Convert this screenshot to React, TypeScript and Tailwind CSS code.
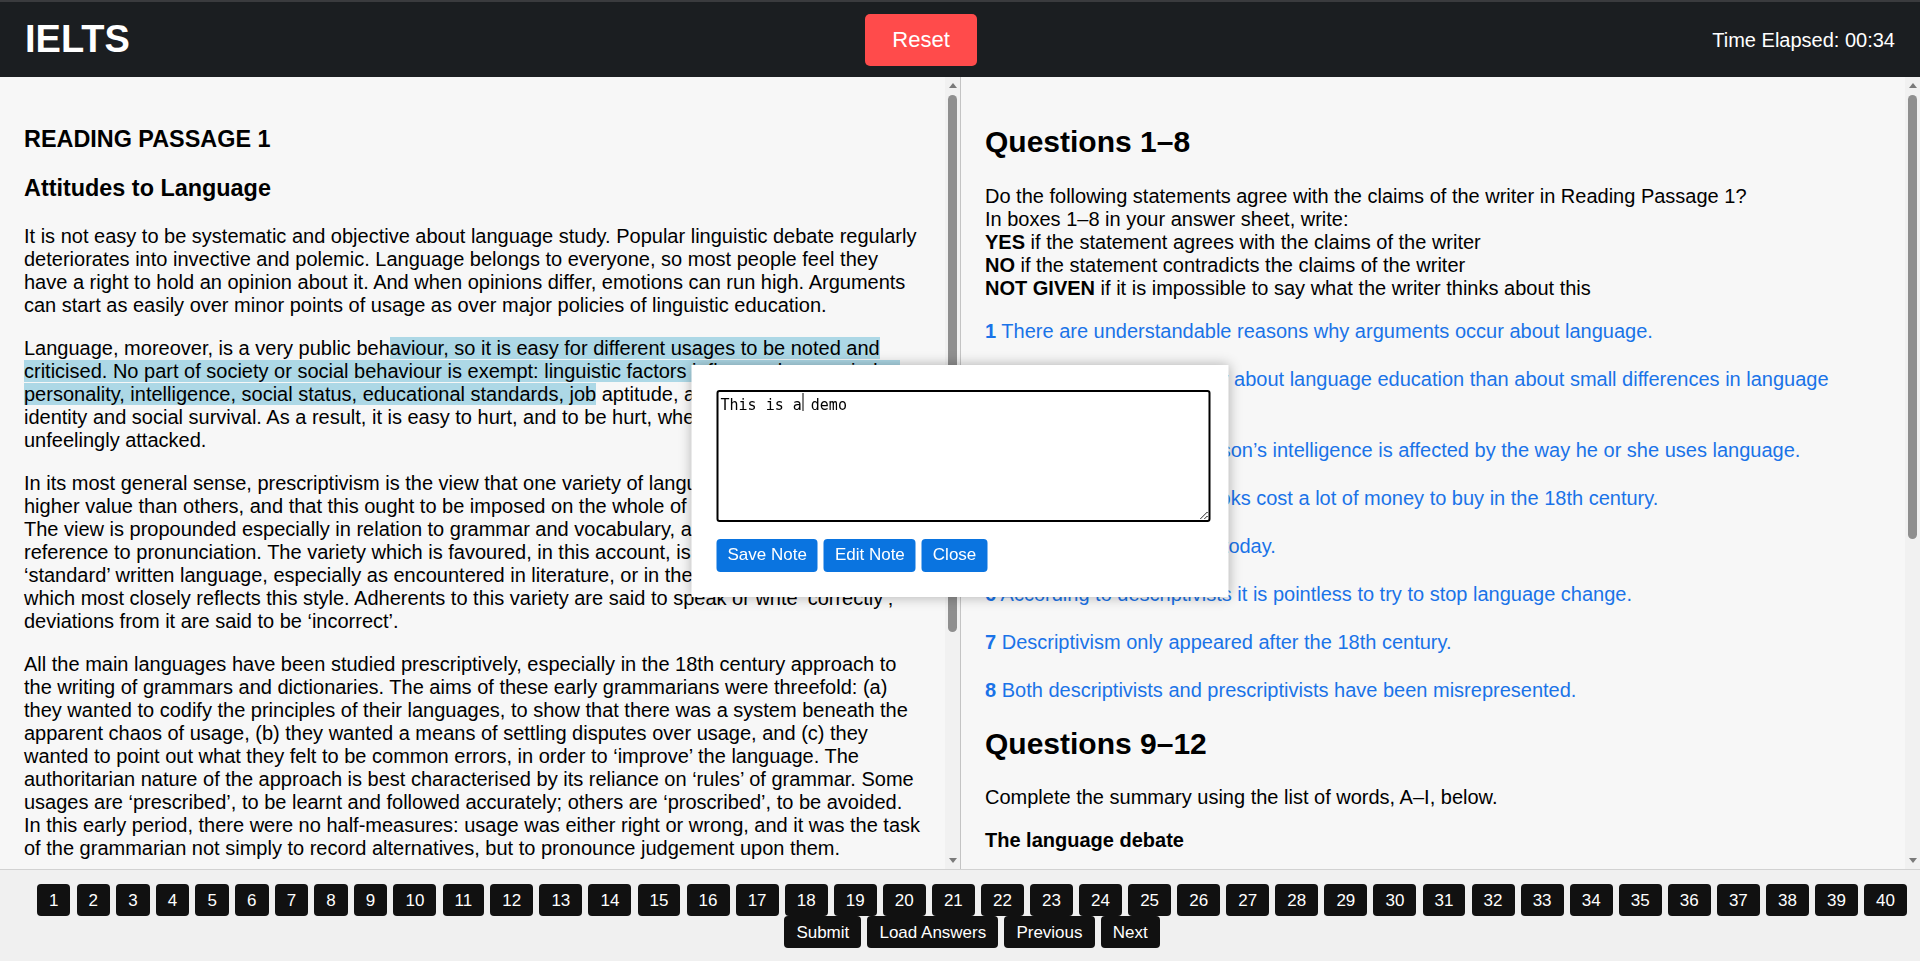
import React, { useEffect, useRef } from 'react';

const questions = [
  'There are understandable reasons why arguments occur about language.',
  'People feel more strongly about language education than about small differences in language usage.',
  'Our assessment of a person\u2019s intelligence is affected by the way he or she uses language.',
  'Prescriptive grammar books cost a lot of money to buy in the 18th century.',
  'Prescriptivism still exists today.',
  'According to descriptivists it is pointless to try to stop language change.',
  'Descriptivism only appeared after the 18th century.',
  'Both descriptivists and prescriptivists have been misrepresented.',
];

const wordList = [
  ['A', 'descriptivists'],
  ['B', 'language experts'],
  ['C', 'popular speech'],
  ['D', 'formal language'],
  ['E', 'evaluation'],
  ['F', 'rules'],
  ['G', 'modern linguists'],
  ['H', 'prescriptivists'],
  ['I', 'change'],
];

const navBtn =
  'h-[32px] px-[12px] bg-[#111111] text-white text-[17px] rounded-[4px] leading-none';

const noteBtn = 'h-[33px] px-[11px] bg-[#0a74e0] text-white text-[17px] rounded-[4px]';

// desktop style scrollbar drawn beside the pane (the headless shot hides native ones)
function ScrollTrack({ thumb }: { thumb: string }) {
  return (
    <div className="w-[15px] shrink-0 bg-[#f1f1f1] flex flex-col items-center">
      <div className="h-[17px] flex items-center justify-center">
        <div className="w-0 h-0 border-x-[4px] border-x-transparent border-b-[5px] border-b-[#7a7a7a]" />
      </div>
      <div className={`w-[9px] rounded-full bg-[#8f8f8f] mt-px ${thumb}`} />
      <div className="flex-1" />
      <div className="h-[17px] flex items-center justify-center">
        <div className="w-0 h-0 border-x-[4px] border-x-transparent border-t-[5px] border-t-[#7a7a7a]" />
      </div>
    </div>
  );
}

export default function App() {
  const noteRef = useRef<HTMLTextAreaElement>(null);

  useEffect(() => {
    const el = noteRef.current;
    if (el) {
      el.focus();
      el.setSelectionRange(9, 9);
    }
  }, []);

  return (
    <div className="h-screen flex flex-col font-['Liberation_Sans',Arial,sans-serif] text-black">
      {/* top bar */}
      <header className="h-[77px] shrink-0 border-t-2 border-[#3a3b3e] bg-[#1b1e21] px-[25px] flex items-center justify-between">
        <h1 className="text-white text-[38px] font-bold">IELTS</h1>
        <button className="h-[52px] px-[27px] bg-[#ff4b4b] text-white text-[22px] rounded-[5px]">
          Reset
        </button>
        <div className="text-white text-[20px]">Time Elapsed: 00:34</div>
      </header>

      <main className="flex-1 min-h-0 flex">
        {/* passage */}
        <section className="w-[961px] shrink-0 flex bg-[#f7f7f7] border-r border-[#c4c4c4]">
          <div className="flex-1 min-w-0 overflow-y-auto [scrollbar-width:none]">
            <div className="px-[24px] pt-[49px] pb-[24px] text-[20px] leading-[23px]">
              <h3 className="text-[23.4px] leading-[27px] font-bold mb-[22.4px]">READING PASSAGE 1</h3>
              <h3 className="text-[23.4px] leading-[27px] font-bold mb-[22.4px]">Attitudes to Language</h3>
              <p className="mb-[20px]">
                It is not easy to be systematic and objective about language study. Popular linguistic debate
                regularly deteriorates into invective and polemic. Language belongs to everyone, so most people feel
                they have a right to hold an opinion about it. And when opinions differ, emotions can run high.
                Arguments can start as easily over minor points of usage as over major policies of linguistic
                education.
              </p>
              <p className="mb-[20px]">
                Language, moreover, is a very public beh
                <span className="bg-[#add8e6]">
                  aviour, so it is easy for different usages to be noted and criticised. No part of society or social
                  behaviour is exempt: linguistic factors influence how we judge personality, intelligence, social
                  status, educational standards, job
                </span>{' '}
                aptitude, and many other areas of identity and social survival. As a result, it is easy to hurt, and
                to be hurt, when language use is unfeelingly attacked.
              </p>
              <p className="mb-[20px]">
                In its most general sense, prescriptivism is the view that one variety of language has an inherently
                higher value than others, and that this ought to be imposed on the whole of the speech community. The
                view is propounded especially in relation to grammar and vocabulary, and frequently with reference to
                pronunciation. The variety which is favoured, in this account, is usually a version of the
                {' \u2018standard\u2019 '}written language, especially as encountered in literature, or in the formal
                spoken language which most closely reflects this style. Adherents to this variety are said to speak or
                write {'\u2018correctly\u2019'}; deviations from it are said to be {'\u2018incorrect\u2019'}.
              </p>
              <p className="mb-[20px]">
                All the main languages have been studied prescriptively, especially in the 18th century approach to
                the writing of grammars and dictionaries. The aims of these early grammarians were threefold: (a) they
                wanted to codify the principles of their languages, to show that there was a system beneath the
                apparent chaos of usage, (b) they wanted a means of settling disputes over usage, and (c) they wanted
                to point out what they felt to be common errors, in order to {'\u2018improve\u2019'} the language. The
                authoritarian nature of the approach is best characterised by its reliance on{' '}
                {'\u2018rules\u2019'} of grammar. Some usages are {'\u2018prescribed\u2019'}, to be learnt and followed
                accurately; others are {'\u2018proscribed\u2019'}, to be avoided. In this early period, there were no
                half-measures: usage was either right or wrong, and it was the task of the grammarian not simply to
                record alternatives, but to pronounce judgement upon them.
              </p>
              <p className="mb-[20px]">
                These attitudes are still with us, and they motivate a widespread concern that linguistic standards
                should be maintained. Nevertheless, there is an alternative point of view that is concerned less with
                standards than with the facts of linguistic usage. This approach is summarised in the statement that
                it is the task of the grammarian to describe, not prescribe {'\u2013'} to record the facts of
                linguistic diversity, and not to attempt the impossible tasks of evaluating language variation or
                halting language change.
              </p>
              <p>
                In our own time, the opposition between {'\u2018descriptivists\u2019'} and{' '}
                {'\u2018prescriptivists\u2019'} has often become extreme, with both sides painting unreal pictures of
                the other. Descriptive grammarians have been presented as people who do not care about standards,
                because of the way they see all forms of usage as equally valid.
              </p>
            </div>
          </div>
          <ScrollTrack thumb="h-[537px]" />
        </section>

        {/* questions */}
        <section className="flex-1 min-w-0 flex bg-[#f7f7f7]">
          <div className="flex-1 min-w-0 overflow-y-auto [scrollbar-width:none]">
            <div className="px-[24px] pt-[48px] pb-[24px] text-[20px] leading-[23px]">
              <h2 className="text-[30px] leading-[34.5px] font-bold mb-[25px]">Questions 1{'\u2013'}8</h2>
              <p className="mb-[20px]">
                Do the following statements agree with the claims of the writer in Reading Passage 1?
                <br />
                In boxes 1{'\u2013'}8 in your answer sheet, write:
                <br />
                <strong>YES</strong> if the statement agrees with the claims of the writer
                <br />
                <strong>NO</strong> if the statement contradicts the claims of the writer
                <br />
                <strong>NOT GIVEN</strong> if it is impossible to say what the writer thinks about this
              </p>
              {questions.map((q, i) => (
                <p key={i} className="mb-[25px] text-[#1a73e8] cursor-pointer">
                  <strong>{i + 1}</strong> {q}
                </p>
              ))}
              <h2 className="text-[30px] leading-[34.5px] font-bold mb-[25px]">Questions 9{'\u2013'}12</h2>
              <p className="mb-[20px]">Complete the summary using the list of words, A{'\u2013'}I, below.</p>
              <p className="mb-[20px] font-bold">The language debate</p>
              <p className="mb-[20px]">
                According to <strong>9</strong> ........................, there is only one correct form of language.
                Linguists who take this approach to language place great importance on grammatical{' '}
                <strong>10</strong> ........................ . Conversely, the view of <strong>11</strong>{' '}
                ........................, such as Joseph Priestley, is that grammar should be based on{' '}
                <strong>12</strong> ........................ .
              </p>
              <div className="grid grid-cols-3 gap-y-[8px] mb-[20px]">
                {wordList.map(([k, w]) => (
                  <div key={k}>
                    <strong>{k}</strong> {w}
                  </div>
                ))}
              </div>
            </div>
          </div>
          <ScrollTrack thumb="h-[444px]" />
        </section>
      </main>

      {/* question navigation */}
      <footer className="shrink-0 border-t border-[#d2d2d2] bg-[#f0f0f0] pt-[14px] pb-[13px] pl-[24px] flex flex-col items-center">
        <div className="flex gap-[6.15px]">
          {Array.from({ length: 40 }, (_, i) => (
            <button key={i} className={navBtn}>
              {i + 1}
            </button>
          ))}
        </div>
        <div className="flex gap-[6.15px]">
          <button className={navBtn}>Submit</button>
          <button className={navBtn}>Load Answers</button>
          <button className={navBtn}>Previous</button>
          <button className={navBtn}>Next</button>
        </div>
      </footer>

      {/* note popup */}
      <div className="fixed left-1/2 top-1/2 -translate-x-1/2 -translate-y-1/2 w-[537px] bg-white p-[25px] shadow-[0_0_12px_rgba(0,0,0,0.3)]">
        <textarea
          ref={noteRef}
          defaultValue="This is a demo"
          className="block w-[494px] h-[132px] border-2 border-black rounded-[3px] px-[2px] py-[2px] font-['DejaVu_Sans_Mono',monospace] text-[15px] outline-none caret-black"
        />
        {/* text caret after "a" */}
        <span className="absolute left-[111px] top-[28px] w-px h-[18px] bg-black" />
        <div className="flex gap-[6px] mt-[17px]">
          <button className={noteBtn}>Save Note</button>
          <button className={noteBtn}>Edit Note</button>
          <button className={noteBtn}>Close</button>
        </div>
      </div>
    </div>
  );
}
